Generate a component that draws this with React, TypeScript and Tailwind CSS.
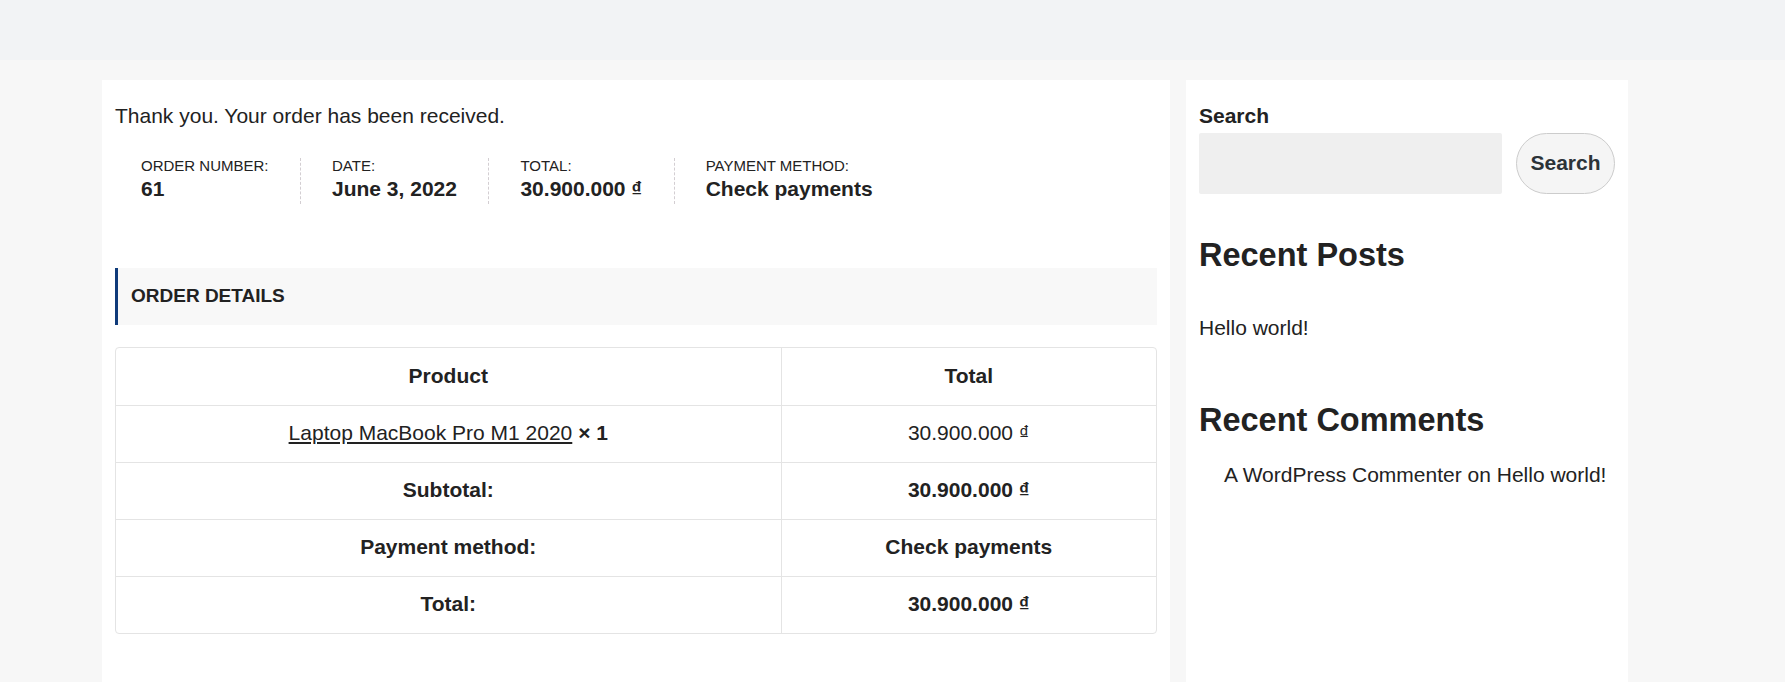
export default function App() {
  const overview = [
    { label: "Order number:", value: "61" },
    { label: "Date:", value: "June 3, 2022" },
    { label: "Total:", value: "30.900.000 ₫" },
    { label: "Payment method:", value: "Check payments" },
  ]

  const totals = [
    { label: "Subtotal:", value: "30.900.000 ₫" },
    { label: "Payment method:", value: "Check payments" },
    { label: "Total:", value: "30.900.000 ₫" },
  ]

  return (
    <div className="min-h-screen bg-[#f7f7f7] text-[#222] font-['Liberation_Sans',Arial,sans-serif]">
      <header className="h-[60px] bg-[#f2f3f5]" />
      <div className="flex gap-[16px] pl-[102px] pt-[20px]">
        <main className="w-[1068px] min-h-[602px] bg-white px-[13px] pt-[20px]">
          <p className="text-[21px] leading-[1.5]">Thank you. Your order has been received.</p>
          <ul className="mt-[26px] flex pl-[26px]">
            {overview.map((item, i) => (
              <li
                key={item.label}
                className={
                  i < overview.length - 1
                    ? "mr-[31px] border-r border-dashed border-[#d3ced2] pr-[31.5px]"
                    : ""
                }
              >
                <span className="block text-[15px] leading-none uppercase">{item.label}</span>
                <strong className="block text-[21px] leading-[1.5] font-bold">{item.value}</strong>
              </li>
            ))}
          </ul>

          <h2 className="mt-[64px] flex h-[57px] items-center border-l-[3px] border-[#0f3b7a] bg-[#f8f8f8] pl-[13px] text-[19px] font-bold uppercase">
            Order details
          </h2>

          <div className="mt-[22px] overflow-hidden rounded-[4px] border border-[#e4e4e4]">
            <table className="w-full border-collapse text-center text-[21px]">
              <thead>
                <tr>
                  <th className="h-[57px] w-[665px] border-r border-b border-[#e4e4e4] pb-[2px] font-bold">Product</th>
                  <th className="h-[57px] border-b border-[#e4e4e4] pb-[2px] font-bold">Total</th>
                </tr>
              </thead>
              <tbody>
                <tr>
                  <td className="h-[57px] border-r border-b border-[#e4e4e4] pb-[2px]">
                    <a href="#" className="underline underline-offset-2">Laptop MacBook Pro M1 2020</a>{" "}
                    <strong className="font-bold">× 1</strong>
                  </td>
                  <td className="h-[57px] border-b border-[#e4e4e4] pb-[2px]">30.900.000 ₫</td>
                </tr>
                {totals.map((row, i) => (
                  <tr key={row.label}>
                    <th
                      className={
                        i < totals.length - 1
                          ? "h-[57px] border-r border-b border-[#e4e4e4] pb-[2px] font-bold"
                          : "h-[57px] border-r border-[#e4e4e4] pb-[2px] font-bold"
                      }
                    >
                      {row.label}
                    </th>
                    <td
                      className={
                        i < totals.length - 1
                          ? "h-[57px] border-b border-[#e4e4e4] pb-[2px] font-bold"
                          : "h-[57px] pb-[2px] font-bold"
                      }
                    >
                      {row.value}
                    </td>
                  </tr>
                ))}
              </tbody>
            </table>
          </div>
        </main>

        <aside className="w-[442px] min-h-[602px] bg-white px-[13px] pt-[20px]">
          <label className="block text-[21px] leading-[1.5] font-bold">Search</label>
          <div className="mt-[1px] flex gap-[14px]">
            <input type="text" className="h-[61px] w-[303px] rounded-[2px] bg-[#efefef] outline-none" />
            <button className="h-[61px] w-[99px] rounded-full border border-[#cccccc] bg-[#f5f5f5] text-[21px] font-bold text-[#2c3338]">
              Search
            </button>
          </div>

          <h2 className="mt-[42px] text-[32.5px] leading-[1.2] font-bold">Recent Posts</h2>
          <ul className="mt-[37px]">
            <li className="text-[21px] leading-[1.5]">
              <a href="#">Hello world!</a>
            </li>
          </ul>

          <h2 className="mt-[58px] text-[32.5px] leading-[1.2] font-bold">Recent Comments</h2>
          <ul className="mt-[19px] pl-[25px]">
            <li className="text-[21px] leading-[1.5]">
              A WordPress Commenter on <a href="#">Hello world!</a>
            </li>
          </ul>
        </aside>
      </div>
    </div>
  )
}
